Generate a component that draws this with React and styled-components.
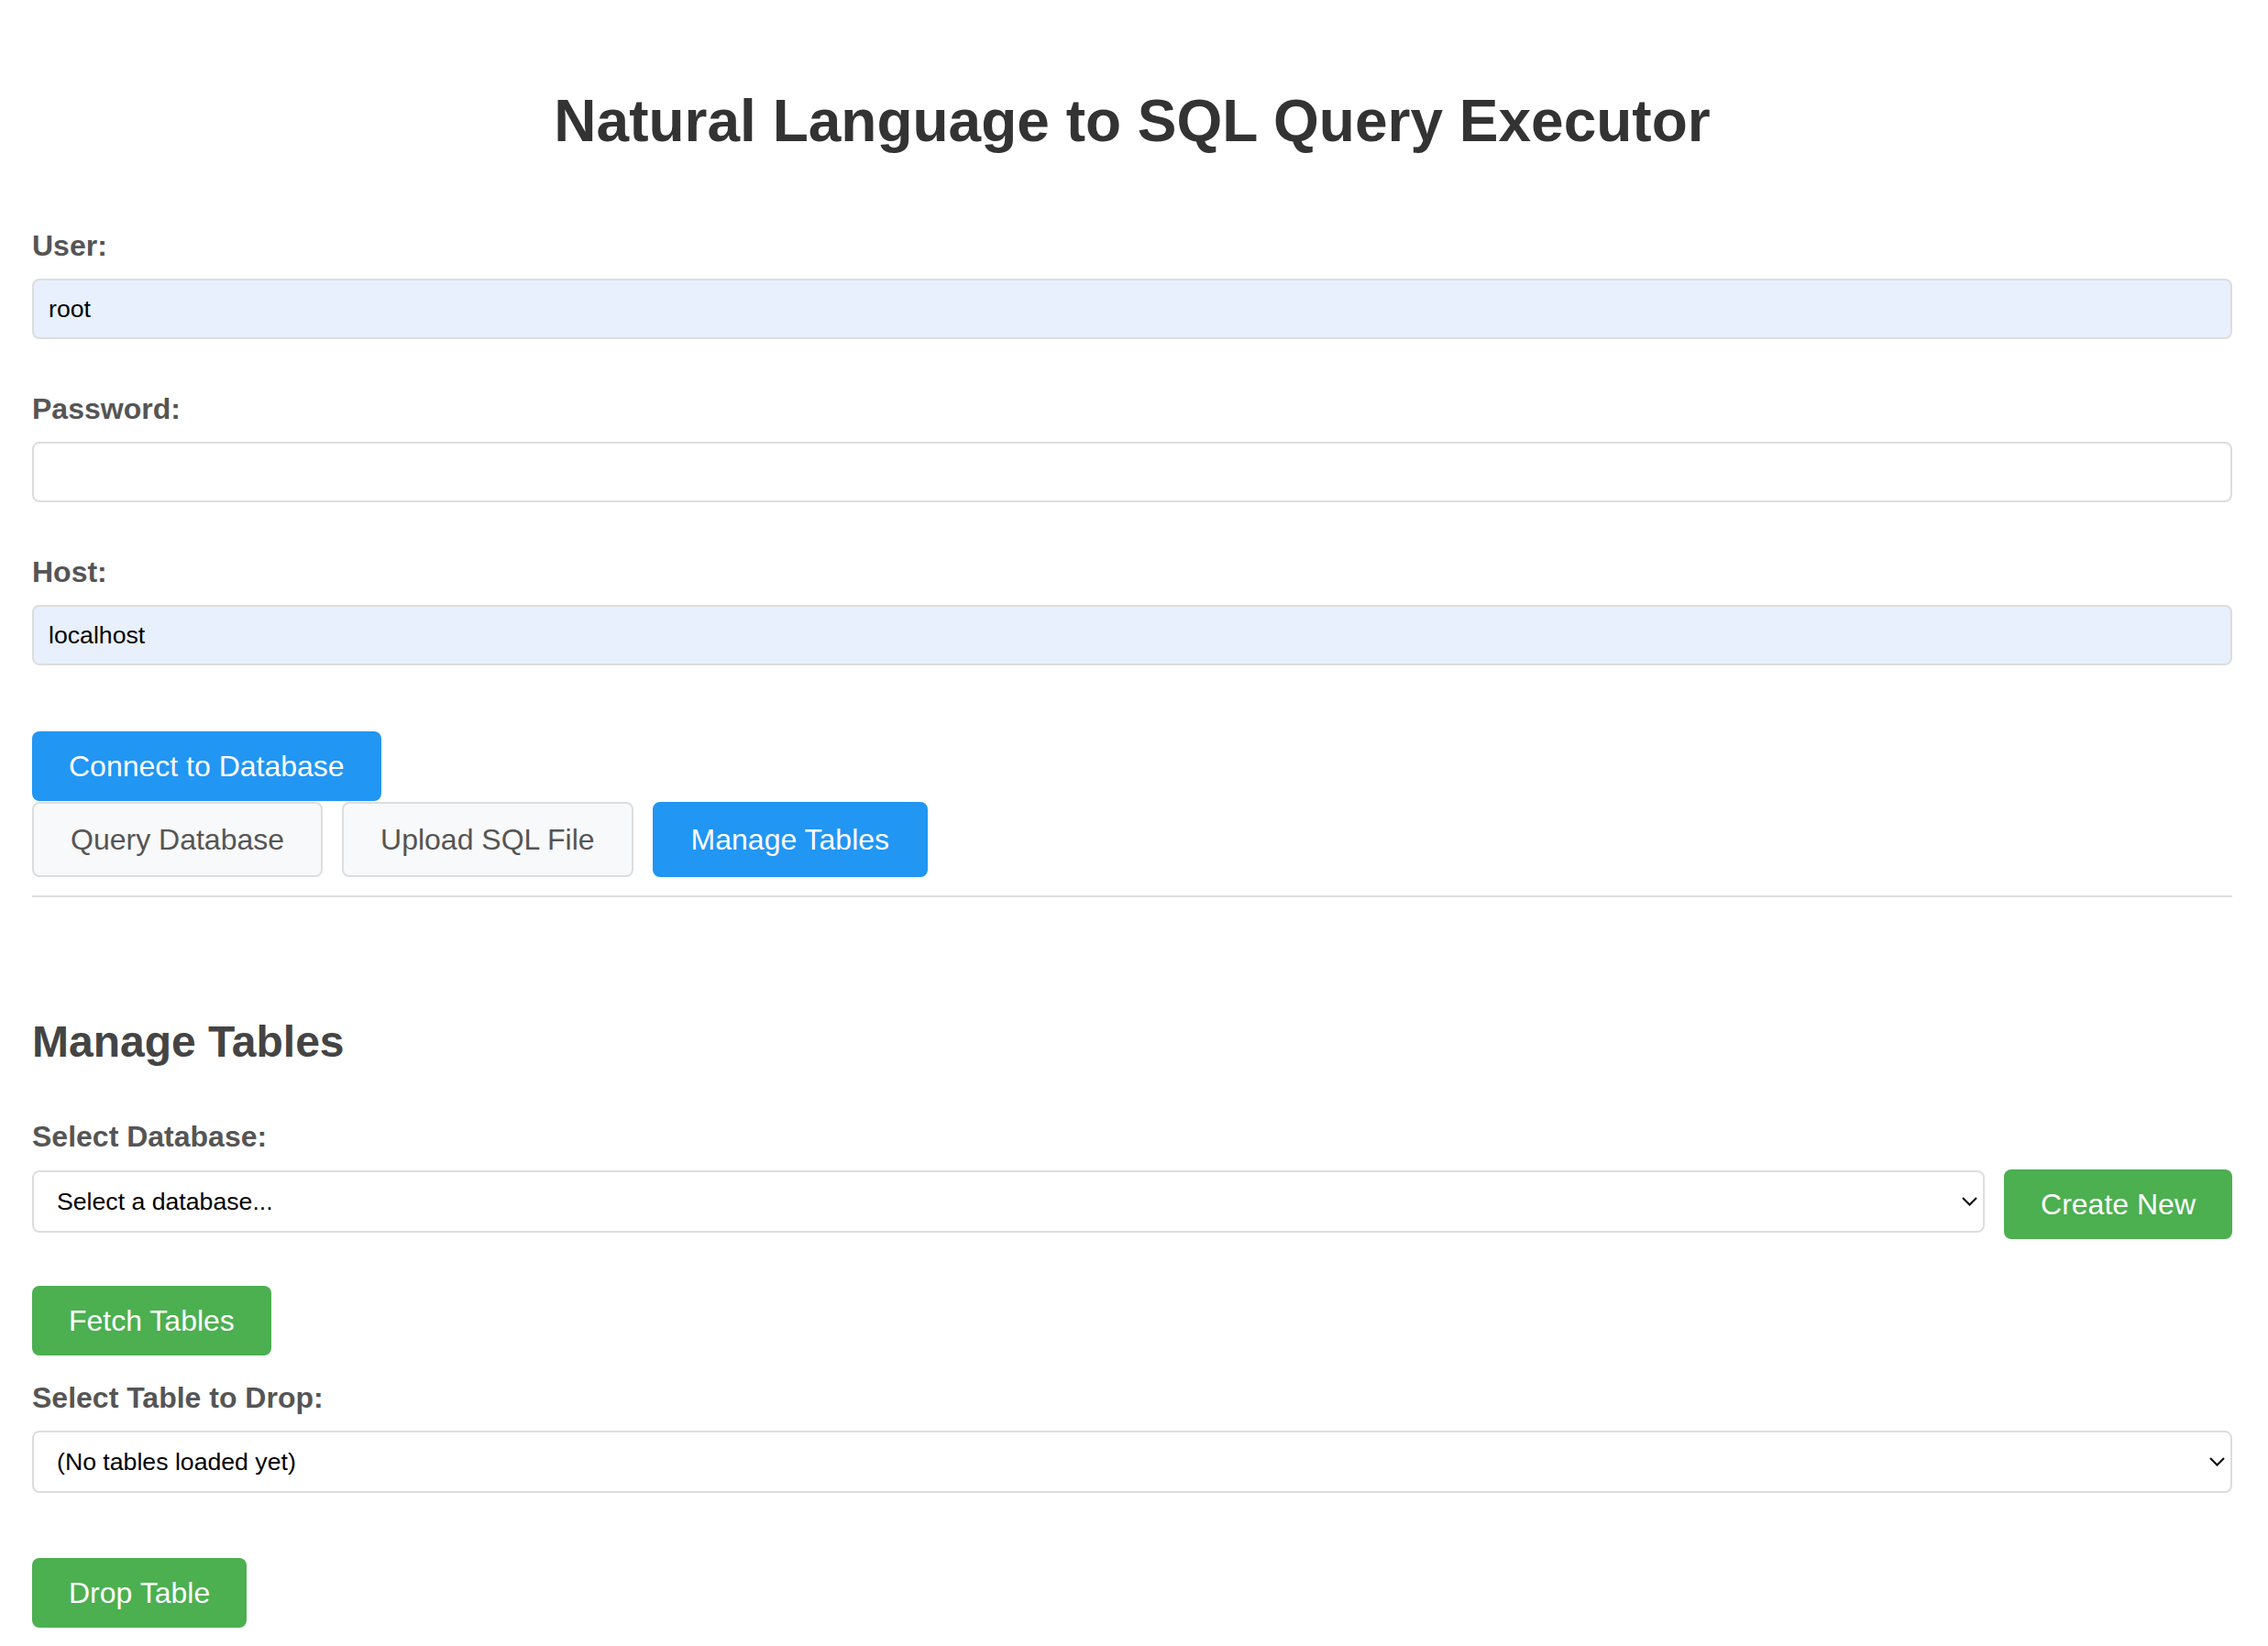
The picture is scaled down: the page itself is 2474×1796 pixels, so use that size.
import React from 'react';
import styled, { createGlobalStyle } from 'styled-components';

const GlobalStyle = createGlobalStyle`
  body {
    margin: 0;
    background: #fff;
    font-family: "Liberation Sans", Arial, sans-serif;
  }
`;

const Page = styled.div`
  width: 2400px;
  margin-left: 35px;
  padding-bottom: 18px;
`;

const Title = styled.h1`
  margin: 96px 0 82px;
  font: 700 64px/72px "Liberation Sans", Arial, sans-serif;
  color: #333;
  text-align: center;
`;

const Label = styled.label`
  display: block;
  margin: ${(p) => p.$top || 0}px 0 18px;
  font: 700 32px/36px "Liberation Sans", Arial, sans-serif;
  color: #555;
`;

const TextInput = styled.input`
  display: block;
  box-sizing: border-box;
  width: 100%;
  height: 66px;
  margin: 0 0 58px;
  padding: 0 16px;
  border: 2px solid #ddd;
  border-radius: 8px;
  background: ${(p) => (p.$filled ? '#e8f0fe' : '#fff')};
  font: 400 26.67px "Liberation Sans", Arial, sans-serif;
  color: #000;
  outline: none;
`;

const Button = styled.button`
  display: block;
  box-sizing: border-box;
  height: 76px;
  padding: 0 40px;
  border: none;
  border-radius: 8px;
  background: ${(p) => (p.$green ? '#4caf50' : '#2196f3')};
  color: #fff;
  font: 400 32px/36px "Liberation Sans", Arial, sans-serif;
  white-space: nowrap;
  cursor: pointer;
  margin-top: ${(p) => p.$top || 0}px;
  flex-shrink: 0;
`;

const TabBar = styled.div`
  display: flex;
  gap: 21px;
  margin-top: 1px;
  padding-bottom: 20px;
  border-bottom: 2px solid #ddd;
`;

const Tab = styled.button`
  box-sizing: border-box;
  height: 82px;
  padding: 0 40px;
  border: 2px solid ${(p) => (p.$active ? '#2196f3' : '#ddd')};
  border-radius: 8px;
  background: ${(p) => (p.$active ? '#2196f3' : '#f8f9fa')};
  color: ${(p) => (p.$active ? '#fff' : '#555')};
  font: 400 32px/38px "Liberation Sans", Arial, sans-serif;
  cursor: pointer;
`;

const SectionTitle = styled.h2`
  margin: 131px 0 58px;
  font: 700 48px/54px "Liberation Sans", Arial, sans-serif;
  color: #444;
`;

const SelectRow = styled.div`
  display: flex;
  align-items: flex-start;
  gap: 21px;
`;

const SelectWrap = styled.div`
  position: relative;
  flex: 1;
  margin-top: ${(p) => p.$top || 0}px;

  svg {
    position: absolute;
    right: 8px;
    top: 50%;
    transform: translateY(-50%);
    pointer-events: none;
  }
`;

const Select = styled.select`
  display: block;
  box-sizing: border-box;
  width: 100%;
  height: 68px;
  padding: 0 40px 0 25px;
  border: 2px solid #ddd;
  border-radius: 8px;
  background: #fff;
  appearance: none;
  font: 400 26.67px "Liberation Sans", Arial, sans-serif;
  color: #000;
  outline: none;
`;

const Chevron = () => (
  <svg width="17" height="10" viewBox="0 0 17 10">
    <polyline points="1,1 8.5,8.5 16,1" fill="none" stroke="#111" strokeWidth="2.2" />
  </svg>
);

function Dropdown({ top, children }) {
  return (
    <SelectWrap $top={top}>
      <Select>{children}</Select>
      <Chevron />
    </SelectWrap>
  );
}

export default function App() {
  return (
    <Page>
      <GlobalStyle />
      <Title>Natural Language to SQL Query Executor</Title>

      <Label>User:</Label>
      <TextInput $filled defaultValue="root" />

      <Label>Password:</Label>
      <TextInput type="password" />

      <Label>Host:</Label>
      <TextInput $filled defaultValue="localhost" />

      {/* margin collapses with the input's 58px below */}
      <Button $top={72}>Connect to Database</Button>

      <TabBar>
        <Tab>Query Database</Tab>
        <Tab>Upload SQL File</Tab>
        <Tab $active>Manage Tables</Tab>
      </TabBar>

      <SectionTitle>Manage Tables</SectionTitle>

      <Label>Select Database:</Label>
      <SelectRow>
        <Dropdown top={1}>
          <option>Select a database...</option>
        </Dropdown>
        <Button $green>Create New</Button>
      </SelectRow>

      <Button $green $top={51}>Fetch Tables</Button>

      <Label $top={28}>Select Table to Drop:</Label>
      <Dropdown>
        <option>(No tables loaded yet)</option>
      </Dropdown>

      <Button $green $top={71}>Drop Table</Button>
    </Page>
  );
}
